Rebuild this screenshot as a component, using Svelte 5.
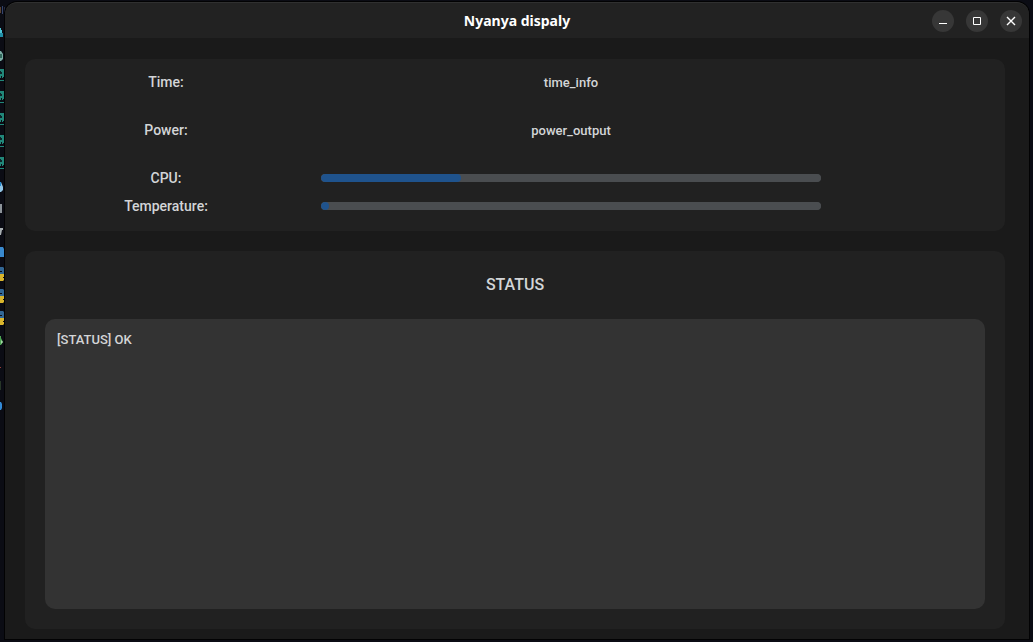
<script>
  const info = [
    { label: 'Time:', value: 'time_info' },
    { label: 'Power:', value: 'power_output' }
  ];
  const gauges = [
    { id: 'cpu', label: 'CPU:', value: 28 },
    { id: 'temperature', label: 'Temperature:', value: 1.6 }
  ];
  const terminals = [69, 91, 113, 135, 157];
  const scripts = [267, 289, 311];
  let log = $state('[STATUS] OK');
</script>

<div class="desktop">
  <svg class="behind" width="5" height="420" viewBox="0 0 5 420" aria-hidden="true">
    <path d="M0 7h1v6H0z" fill="#5b4335" />
    <path d="M2 6h1v8H2z" fill="#34446f" />
    <path d="M4 7h1v5H4z" fill="#252b43" />
    <path d="M0 28h1v2h1v6H0z" fill="#4dc4d6" />
    <path d="M0 33h3v4H0z" fill="#218fa6" />
    <path d="M0 51h1l2 3v5l-2 2H0z" fill="#79aba3" />
    <path d="M0 54h2v4H0z" fill="#31695c" />
    {#each terminals as y}
      <g transform="translate(0 {y})">
        <path d="M0 0h4v8H3v1H2V7H1v2H0z" fill="#218779" />
        <path d="M0 2h1v1h1v2H0z" fill="#0d2529" />
        <path d="M0 11h4v1H0z" fill="#218779" />
      </g>
    {/each}
    <path d="M0 182h1l2 5v3l-2 2H0z" fill="#91c5e5" />
    <path d="M0 182h1v4H0z" fill="#258bd0" />
    <path d="M0 204h2v9H0z" fill="#8c9399" />
    <path d="M0 228h3v2H2l-1 5H0z" fill="#a7adb0" />
    <path d="M0 247h3l1 2v8H0z" fill="#3989ce" />
    {#each scripts as y}
      <g transform="translate(0 {y})">
        <path d="M0 0h3l1 1v6H0V5h2V4H0z" fill="#326795" />
        <path d="M0 7h4v3H3v1h1v2l-1 1H0z" fill="#d9b52c" />
      </g>
    {/each}
    <path d="M0 336h1v2l2 4-2 3H0z" fill="#4ca552" />
    <path d="M1 340l2 2-2 2z" fill="#a9d3aa" />
    <path d="M0 367h1v1H0z" fill="#9b3e36" />
    <path d="M0 381h1v9H0z" fill="#273627" />
    <path d="M0 402h1l1 2v4l-1 2H0z" fill="#338bd8" />
  </svg>

  <div class="window">
    <header>
      <h1>Nyanya dispaly</h1>
      <div class="controls">
        <button type="button" aria-label="Minimize">
          <svg width="22" height="22" viewBox="0 0 22 22"><path d="M7 13.5h8" /></svg>
        </button>
        <button type="button" aria-label="Maximize">
          <svg width="22" height="22" viewBox="0 0 22 22"><path d="M7.5 7.5h7v7h-7z" /></svg>
        </button>
        <button type="button" aria-label="Close">
          <svg width="22" height="22" viewBox="0 0 22 22"><path d="M7 7l8 8M15 7l-8 8" stroke-width="1.4" /></svg>
        </button>
      </div>
    </header>

    <main>
      <section class="panel readings">
        {#each info as row}
          <div class="row spaced">
            <span class="name">{row.label}</span>
            <span class="value">{row.value}</span>
          </div>
        {/each}
        {#each gauges as row}
          <div class="row">
            <label class="name" for={row.id}>{row.label}</label>
            <span class="value"><progress id={row.id} max="100" value={row.value}></progress></span>
          </div>
        {/each}
      </section>

      <section class="panel status">
        <label class="heading" for="log">STATUS</label>
        <textarea id="log" spellcheck="false" bind:value={log}></textarea>
      </section>
    </main>
  </div>
</div>

<style>
  :global(body) {
    margin: 0;
    background: #0b0c14;
  }

  .desktop {
    box-sizing: border-box;
    display: flex;
    min-height: 100vh;
    padding: 2px 4px 3px 0;
    background: #0b0c14;
    color: #d3d5d7;
    font-family: Roboto, "Liberation Sans", sans-serif;
    font-size: 13px;
    font-weight: 500;
  }

  .behind {
    flex: none;
    display: block;
    margin-top: -2px;
  }

  .window {
    flex: 1;
    display: flex;
    flex-direction: column;
    min-width: 0;
    overflow: hidden;
    border-radius: 12px 12px 0 0;
    background: #1a1a1a;
    box-shadow: 0 0 0 1px #020203;
  }

  header {
    box-sizing: border-box;
    display: grid;
    grid-template-columns: 1fr auto 1fr;
    align-items: center;
    height: 36px;
    padding: 0 7px;
    border-top: 1px solid #303030;
    border-radius: 12px 12px 0 0;
    background: #222222;
  }

  h1 {
    grid-column: 2;
    margin: 0;
    color: #ffffff;
    font-family: "Noto Sans", "Open Sans", sans-serif;
    font-size: 14px;
    line-height: 20px;
    font-weight: 700;
  }

  .controls {
    display: flex;
    justify-content: flex-end;
    gap: 12px;
  }

  button {
    width: 22px;
    height: 22px;
    padding: 0;
    border: 0;
    border-radius: 50%;
    background: #373737;
  }

  button svg {
    display: block;
    fill: none;
    stroke: #ffffff;
  }

  main {
    flex: 1;
    display: flex;
    flex-direction: column;
    gap: 20px;
    padding: 21px 24px 10px 20px;
  }

  .panel {
    border-radius: 10px;
    background: #212121;
  }

  .readings {
    padding: 9px 0 11px;
  }

  .row {
    display: grid;
    grid-template-columns: 282fr 528fr 170fr;
    align-items: center;
    height: 28px;
  }

  .spaced {
    margin-bottom: 20px;
  }

  .name {
    font-size: 14px;
    text-align: center;
  }

  .value {
    display: block;
    padding: 0 14px;
    text-align: center;
  }

  progress {
    display: block;
    appearance: none;
    width: 100%;
    height: 8px;
    border: 0;
    border-radius: 4px;
    overflow: hidden;
    background: #4a4d50;
  }

  progress::-webkit-progress-bar {
    border-radius: 4px;
    background: #4a4d50;
  }

  progress::-webkit-progress-value {
    border-radius: 4px;
    background: #1f538d;
  }

  .status {
    flex: 1;
    display: flex;
    flex-direction: column;
    padding: 20px;
  }

  .heading {
    margin-bottom: 20px;
    font-size: 16px;
    line-height: 28px;
    text-align: center;
  }

  textarea {
    box-sizing: border-box;
    display: block;
    flex: 1;
    width: 100%;
    padding: 12px;
    border: 0;
    border-radius: 10px;
    outline: 0;
    resize: none;
    background: #333333;
    color: inherit;
    font: inherit;
    line-height: 18px;
  }
</style>
